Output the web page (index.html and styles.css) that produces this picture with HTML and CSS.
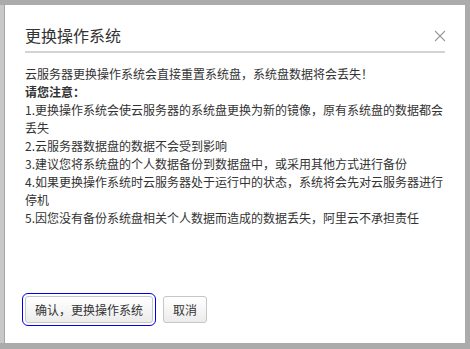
FILE: index.html
```html
<!DOCTYPE html>
<html lang="zh-CN">
<head>
<meta charset="utf-8">
<title>更换操作系统</title>
<link rel="stylesheet" href="styles.css">
</head>
<body>
<div class="stage">
  <div class="edge"></div>
  <div class="dialog">
    <div class="head">
      <h1 class="title">更换操作系统</h1>
      <svg class="close" width="12" height="12" viewBox="0 0 12 12"><path d="M1 1L11 11M11 1L1 11" stroke="#9a9a9a" stroke-width="1.1" fill="none"/></svg>
    </div>
    <div class="body">
      <p>云服务器更换操作系统会直接重置系统盘，系统盘数据将会丢失！</p>
      <p class="strong">请您注意：</p>
      <p>1.更换操作系统会使云服务器的系统盘更换为新的镜像，原有系统盘的数据都会丢失</p>
      <p>2.云服务器数据盘的数据不会受到影响</p>
      <p>3.建议您将系统盘的个人数据备份到数据盘中，或采用其他方式进行备份</p>
      <p>4.如果更换操作系统时云服务器处于运行中的状态，系统将会先对云服务器进行停机</p>
      <p>5.因您没有备份系统盘相关个人数据而造成的数据丢失，阿里云不承担责任</p>
    </div>
    <div class="foot">
      <button class="btn focus">确认，更换操作系统</button>
      <button class="btn">取消</button>
    </div>
  </div>
</div>
</body>
</html>
```
FILE: styles.css
```css
html, body {
  margin: 0;
  padding: 0;
}
body {
  background: #ababab;
  width: 470px;
  height: 349px;
  overflow: hidden;
  font-family: "Noto Sans CJK SC", "Liberation Sans", sans-serif;
  color: #333;
}
.stage {
  display: flex;
  padding-top: 5px;
}
.edge {
  width: 4px;
  height: 338px;
  background: #c8c8c8;
  border-right: 1px solid #a6a6a6;
}
.dialog {
  width: 460px;
  height: 338px;
  background: #fff;
  display: flex;
  flex-direction: column;
}
.head {
  margin: 0 20px;
  padding-top: 19px;
  height: 27px;
  border-bottom: 2px solid #d3d3d3;
  display: flex;
  justify-content: space-between;
  align-items: flex-start;
}
.title {
  margin: 0;
  font-size: 16px;
  font-weight: normal;
  line-height: 22px;
  color: #333;
}
.close {
  margin-top: 6px;
  margin-right: -1px;
}
.body {
  padding: 12px 20px 0 20px;
  width: 422px;
  font-size: 12px;
  line-height: 18px;
}
.body p {
  margin: 0;
}
.strong {
  font-weight: bold;
}
.foot {
  margin-top: auto;
  padding: 0 0 20px 20px;
  display: flex;
  gap: 10px;
}
.btn {
  height: 27px;
  padding: 0 9px;
  font-family: "Noto Sans CJK SC", "Liberation Sans", sans-serif;
  font-size: 12px;
  color: #333;
  background: linear-gradient(#fff, #ececec);
  border: 1px solid #c6c6c6;
  border-radius: 3px;
  line-height: 25px;
}
.btn.focus {
  width: 128px;
  outline: 1px solid #0000ee;
  outline-offset: 2px;
}
```
